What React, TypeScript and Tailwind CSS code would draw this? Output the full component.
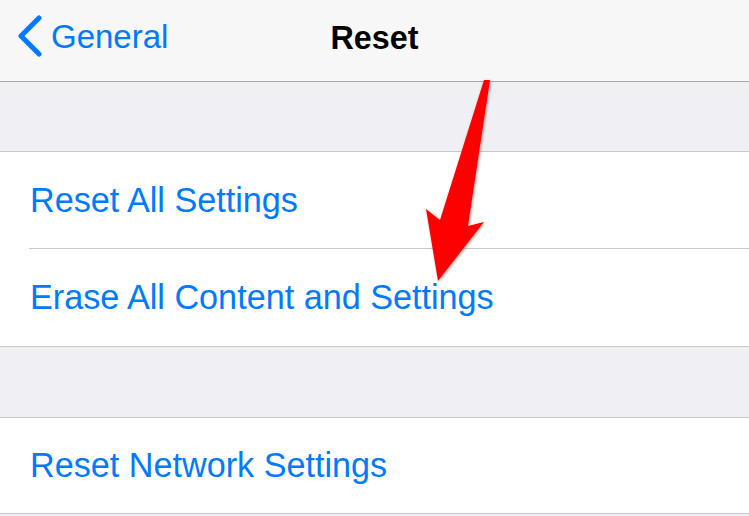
import React from "react";

const font = { fontFamily: '"Liberation Sans", Arial, sans-serif' };

function Row({ label, last, h }: { label: string; last?: boolean; h?: string }) {
  return (
    <div className={`relative ${h ?? "h-[97px]"} flex items-center bg-white`}>
      <span className="pl-[30px] text-[34.2px] text-[#007aff] leading-none">{label}</span>
      {!last && <div className="absolute left-[29px] right-0 bottom-0 h-px bg-[#c8c7cc]" />}
    </div>
  );
}

export default function App() {
  return (
    <div className="relative w-[749px] h-[516px] overflow-hidden bg-[#efeff4]" style={font}>
      <div className="h-[82px] bg-[#f7f7f7] border-b-[1.5px] border-[#a9a9ac] flex items-center relative pb-[8px]">
        <div className="flex items-center pl-[17px]">
          <svg width="26" height="44" viewBox="0 0 26 44" className="mr-[8px]">
            <polyline points="22,3 4,21 22,39" fill="none" stroke="#007aff" strokeWidth="5" strokeLinecap="round" strokeLinejoin="round" />
          </svg>
          <span className="text-[33px] text-[#007aff] leading-none">General</span>
        </div>
        <div className="absolute inset-x-0 top-0 h-[76px] flex items-center justify-center">
          <span className="text-[32.3px] font-bold text-black leading-none">Reset</span>
        </div>
      </div>
      <div className="h-[70px] border-b border-[#c8c7cc]" />
      <div className="border-b border-[#c8c7cc]">
        <Row label="Reset All Settings" />
        <Row label="Erase All Content and Settings" last />
      </div>
      <div className="h-[71px] border-b border-[#c8c7cc]" />
      <div className="border-b border-[#c8c7cc]">
        <Row label="Reset Network Settings" last h="h-[95px]" />
      </div>
      <svg className="absolute left-0 top-0" width="749" height="516" viewBox="0 0 749 516">
        <defs>
          <filter id="sh" x="-20%" y="-20%" width="140%" height="140%">
            <feDropShadow dx="1" dy="1" stdDeviation="1.5" floodColor="#000" floodOpacity="0.35" />
          </filter>
        </defs>
        <polygon
          points="484,80 490,80 468,226 484,222 438,281 426,209 440,220"
          fill="#ff0000"
          filter="url(#sh)"
        />
      </svg>
    </div>
  );
}
